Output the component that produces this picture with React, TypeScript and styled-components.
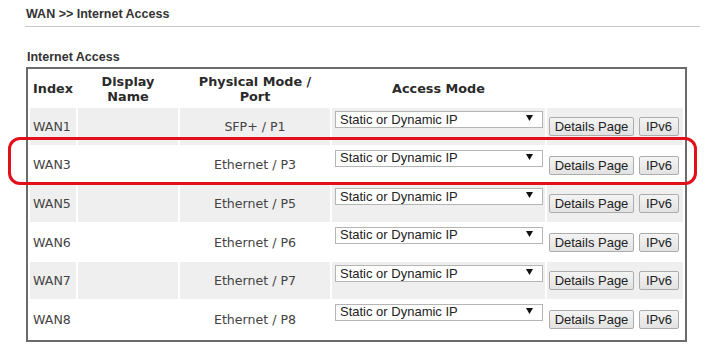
import styled, { createGlobalStyle } from "styled-components";

const GlobalStyle = createGlobalStyle`
  body {
    margin: 0;
    background: #fff;
    font-family: "Liberation Sans", Arial, sans-serif;
  }
`;

const wans = [
  { index: "WAN1", port: "SFP+ / P1" },
  { index: "WAN3", port: "Ethernet / P3" },
  { index: "WAN5", port: "Ethernet / P5" },
  { index: "WAN6", port: "Ethernet / P6" },
  { index: "WAN7", port: "Ethernet / P7" },
  { index: "WAN8", port: "Ethernet / P8" },
];

export default function App() {
  return (
    <Page>
      <GlobalStyle />
      <Title>WAN &gt;&gt; Internet Access</Title>
      <SectionLabel>Internet Access</SectionLabel>
      <TableWrap>
        <Table>
          <colgroup>
            <col style={{ width: 46 }} />
            <col style={{ width: 100 }} />
            <col style={{ width: 150 }} />
            <col style={{ width: 213 }} />
            <col style={{ width: 136 }} />
          </colgroup>
          <thead>
            <tr>
              <Th>Index</Th>
              <Th>
                Display
                <br />
                Name
              </Th>
              <Th>
                Physical Mode /
                <br />
                Port
              </Th>
              <Th>Access Mode</Th>
              <Th />
            </tr>
          </thead>
          <tbody>
            {wans.map((w, i) => (
              <Row key={w.index} $shaded={i % 2 === 0}>
                <IndexCell>{w.index}</IndexCell>
                <Td />
                <PortCell>{w.port}</PortCell>
                <SelectCell>
                  <FakeSelect>
                    <span>Static or Dynamic IP</span>
                    <svg width="7" height="6" viewBox="0 0 7 6">
                      <path d="M0 0 H7 L3.5 6 Z" fill="#111" />
                    </svg>
                  </FakeSelect>
                </SelectCell>
                <ButtonCell>
                  <Button $w={85}>Details Page</Button>
                  <Button $w={40}>IPv6</Button>
                </ButtonCell>
              </Row>
            ))}
          </tbody>
        </Table>
        <Highlight />
      </TableWrap>
    </Page>
  );
}

const Page = styled.div`
  padding: 0 6px 0 25px;
  width: 675px;
`;

const Title = styled.div`
  padding: 6px 0 4px 1px;
  line-height: 16px;
  font-size: 12.5px;
  font-weight: bold;
  color: #333;
  border-bottom: 1px solid #c8c8c8;
`;

const SectionLabel = styled.div`
  margin: 23px 0 2px 2px;
  line-height: 15px;
  font-size: 12.5px;
  font-weight: bold;
  color: #333;
`;

const TableWrap = styled.div`
  position: relative;
  margin-left: 1px;
  width: 661px;
`;

const Table = styled.table`
  width: 661px;
  table-layout: fixed;
  border: 2px solid #6b6b6b;
  border-spacing: 2px;
  font-family: "DejaVu Sans", Verdana, sans-serif;
  color: #444;
`;

const Th = styled.th`
  height: 35px;
  padding: 0;
  font-size: 12.8px;
  line-height: 15px;
  font-weight: bold;
  color: #2a2a2a;
  text-align: center;
  vertical-align: middle;
`;

const Row = styled.tr<{ $shaded: boolean }>`
  height: 36.6px;

  td {
    background: ${(p) => (p.$shaded ? "#efefef" : "#fff")};
  }
`;

const Td = styled.td`
  padding: 0;
  font-size: 12.6px;
  vertical-align: middle;
`;

const IndexCell = styled(Td)`
  padding-left: 3px;
`;

const PortCell = styled(Td)`
  text-align: center;
`;

const SelectCell = styled(Td)`
  vertical-align: top;
  padding: 3px 0 0 3px;
`;

const FakeSelect = styled.div`
  box-sizing: border-box;
  display: flex;
  align-items: center;
  justify-content: space-between;
  width: 208px;
  height: 17px;
  padding: 0 9px 1px 4px;
  background: #fff;
  border: 1px solid #b5b5b5;
  font-family: "Liberation Sans", Arial, sans-serif;
  font-size: 13px;
  color: #222;

  svg {
    margin-top: -2px;
  }
`;

const ButtonCell = styled(Td)`
  vertical-align: top;
  padding: 9px 0 0 2px;
  white-space: nowrap;
`;

const Button = styled.button<{ $w: number }>`
  box-sizing: border-box;
  width: ${(p) => p.$w}px;
  height: 19px;
  margin-right: 5px;
  padding: 0;
  border: 1px solid #acacac;
  border-radius: 2px;
  background: linear-gradient(#f4f4f4, #e2e2e2);
  font-family: "Liberation Sans", Arial, sans-serif;
  font-size: 13px;
  color: #222;
  vertical-align: top;
`;

const Highlight = styled.div`
  position: absolute;
  left: -18px;
  top: 70px;
  width: 689px;
  height: 48px;
  box-sizing: border-box;
  border: 3.5px solid #e3101b;
  border-radius: 12px;
  pointer-events: none;
`;
